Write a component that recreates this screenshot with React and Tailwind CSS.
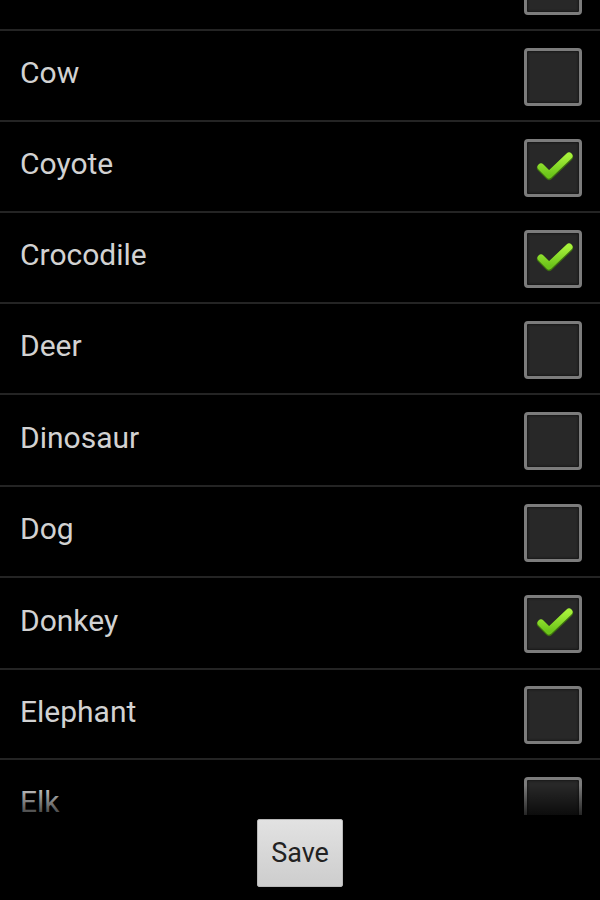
import React from "react";

const H = { 90: "h-[90px]", 91: "h-[91px]", 92: "h-[92px]" };

const items = [
  { name: "", checked: false, h: 91 },
  { name: "Cow", checked: false, h: 91 },
  { name: "Coyote", checked: true, h: 91 },
  { name: "Crocodile", checked: true, h: 91 },
  { name: "Deer", checked: false, h: 91 },
  { name: "Dinosaur", checked: false, h: 92 },
  { name: "Dog", checked: false, h: 91 },
  { name: "Donkey", checked: true, h: 92 },
  { name: "Elephant", checked: false, h: 90 },
  { name: "Elk", checked: false, h: 91 },
];

function Check() {
  return (
    <svg width="58" height="58" viewBox="0 0 58 58" className="absolute -left-[3px] -top-[3px]">
      <defs>
        <linearGradient id="g" x1="0" y1="0" x2="0" y2="1">
          <stop offset="0" stopColor="#a6f03a" />
          <stop offset="1" stopColor="#6cc41a" />
        </linearGradient>
      </defs>
      <path d="M17 28 L25 36 L45 17" fill="none" stroke="#3d6e10" strokeWidth="8" strokeLinecap="round" strokeLinejoin="round" transform="translate(0 1)" />
      <path d="M17 28 L25 36 L45 17" fill="none" stroke="url(#g)" strokeWidth="7" strokeLinecap="round" strokeLinejoin="round" />
    </svg>
  );
}

function Box({ checked }) {
  return (
    <div className="relative w-[58px] h-[58px] rounded-[4px] border-[3px] border-[#7c7c7c] bg-[#282828] shadow-[inset_0_0_3px_rgba(0,0,0,0.8)]">
      {checked && <Check />}
    </div>
  );
}

export default function App() {
  return (
    <div className="w-[600px] h-[900px] bg-black overflow-hidden flex flex-col" style={{ fontFamily: "Roboto, 'Liberation Sans', sans-serif" }}>
      <div className="relative h-[815px] overflow-hidden shrink-0">
        <div className="-mt-[60px]">
          {items.map((it, i) => (
            <div key={i} className={`${H[it.h]} border-b-2 border-[#242424] flex items-center justify-between pl-[20px] pr-[18px]`}>
              <span className="text-[30px] leading-none text-[#d2d2d2] -mt-[5px]">{it.name}</span>
              <div className="mt-[2px]">
                <Box checked={it.checked} />
              </div>
            </div>
          ))}
        </div>
        <div className="absolute left-0 right-0 bottom-0 h-[30px] bg-gradient-to-b from-transparent to-black/70" />
      </div>
      <div className="flex justify-center pt-[4px]">
        <button className="w-[86px] h-[68px] rounded-[2px] border border-[#b8b8b8] bg-gradient-to-b from-[#e2e2e2] to-[#cdcdcd] text-[27px] text-[#222] flex items-center justify-center">
          Save
        </button>
      </div>
    </div>
  );
}
